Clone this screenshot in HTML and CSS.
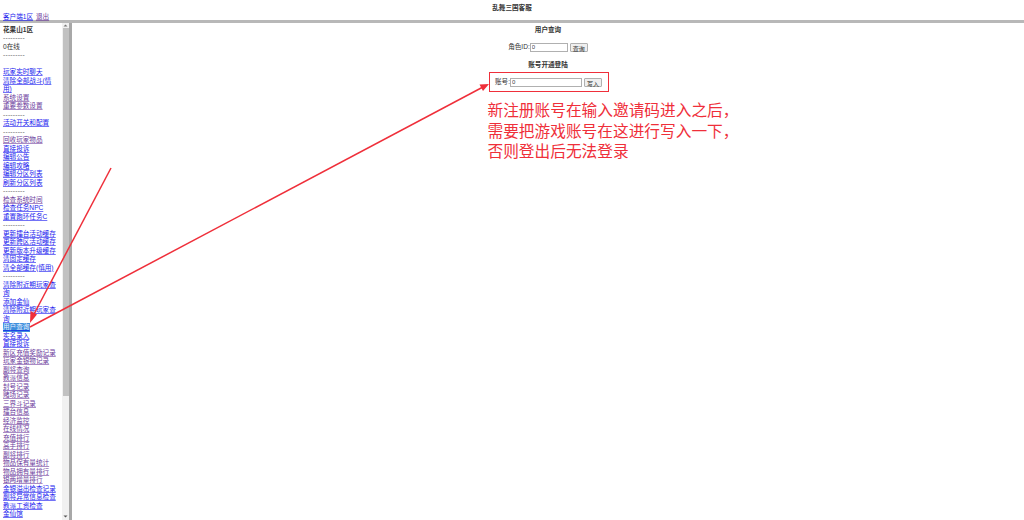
FILE: index.html
```html
<!DOCTYPE html>
<html lang="zh">
<head>
<meta charset="utf-8">
<title>乱舞三国客服</title>
<link rel="stylesheet" href="styles.css">
</head>
<body>
<header class="top">
  <div class="title">乱舞三国客服</div>
  <div class="top-links"><a href="#a">客户端1区</a> <a class="seen" href="#b">退出</a></div>
</header>
<div class="frames">
  <nav class="side">
    <div class="zone">花果山1区</div>
    <div class="dash">---------</div>
    <div>0在线</div>
    <div class="dash">---------</div>
    <div class="blank"></div>
    <a href="#1">玩家实时聊天</a>
    <a href="#2">清除全部战斗(情用)</a>
    <a class="seen" href="#3">系统设置</a>
    <a class="seen" href="#4">重要参数设置</a>
    <div class="dash">---------</div>
    <a href="#5">活动开关和配置</a>
    <div class="dash">---------</div>
    <a class="seen" href="#6">回收玩家物品</a>
    <a href="#7">直接投诉</a>
    <a href="#8">编辑公告</a>
    <a href="#9">编辑攻略</a>
    <a href="#10">编辑分区列表</a>
    <a href="#11">刷新分区列表</a>
    <div class="dash">---------</div>
    <a class="seen" href="#12">检查系统时间</a>
    <a href="#13">检查任务NPC</a>
    <a href="#14">重置跑环任务C</a>
    <div class="dash">---------</div>
    <a href="#15">更新擂台活动缓存</a>
    <a href="#16">更新跨区活动缓存</a>
    <a href="#17">更新版本升级缓存</a>
    <a href="#18">清固定缓存</a>
    <a href="#19">清全部缓存(慎用)</a>
    <div class="dash">---------</div>
    <a href="#20">清除附近期玩家查询</a>
    <a href="#21">添加金仙</a>
    <a href="#22">清除附近期玩家查询</a>
    <a class="picked" href="#23">用户查询</a>
    <a href="#24">实名录入</a>
    <a href="#25">直接投诉</a>
    <a class="seen" href="#26">新区充值奖励记录</a>
    <a class="seen" href="#27">玩家金银物记录</a>
    <a class="seen" href="#28">副将查询</a>
    <a class="seen" href="#29">教派信息</a>
    <a class="seen" href="#30">封号记录</a>
    <a class="seen" href="#31">赌场记录</a>
    <a class="seen" href="#32">三界斗记录</a>
    <a class="seen" href="#33">擂台信息</a>
    <a class="seen" href="#34">经济监控</a>
    <a class="seen" href="#35">在线情况</a>
    <a class="seen" href="#36">充值排行</a>
    <a class="seen" href="#37">高手排行</a>
    <a class="seen" href="#38">副将排行</a>
    <a class="seen" href="#39">物品保有量统计</a>
    <a class="seen" href="#40">物品拥有量排行</a>
    <a class="seen" href="#41">银两增量排行</a>
    <a href="#42">金银溢出检查记录</a>
    <a href="#43">副将异常信息检查</a>
    <a href="#44">教派工资检查</a>
    <a href="#45">金仙馆</a>
  </nav>
  <div class="rail" aria-hidden="true">
    <svg class="step" width="7" height="5" viewBox="0 0 7 5"><path d="M3.500 1.500 L5.500 3.500 L1.500 3.500 Z" fill="#777"/></svg>
    <div class="thumb"></div>
    <svg class="step end" width="7" height="5" viewBox="0 0 7 5"><path d="M3.500 3.500 L5.500 1.500 L1.500 1.500 Z" fill="#555"/></svg>
  </div>
  <main class="content">
    <h3 class="head">用户查询</h3>
    <form class="line">
      <label for="role">角色ID:</label><input id="role" class="field short" value="0"><button type="button" class="btn">查询</button>
    </form>
    <h3 class="head second">账号开通登陆</h3>
    <form class="line boxed">
      <label for="acct">账号:</label><input id="acct" class="field long" value="0"><button type="button" class="btn">写入</button>
    </form>
    <p class="note">新注册账号在输入邀请码进入之后，<br>需要把游戏账号在这进行写入一下，<br>否则登出后无法登录</p>
  </main>
</div>
<svg class="marks" width="1024" height="520" viewBox="0 0 1024 520" aria-hidden="true">
  <g stroke="#ef2f3a" stroke-width="1.5" fill="none">
    <path d="M111 168 L33 316"/>
    <path d="M30 327 L483 87"/>
  </g>
  <path d="M30 323 L30.500 311 L37 314.500 Z" fill="#ef2f3a"/>
  <path d="M489 84 L479.500 84.500 L483 91 Z" fill="#ef2f3a"/>
</svg>
</body>
</html>
```
FILE: styles.css
```css
* { box-sizing: border-box; }
html, body { margin: 0; height: 100%; overflow: hidden; background: #fff; }
body {
  font-family: "Liberation Sans", "Noto Sans CJK SC", sans-serif;
  font-size: 6.6px;
  line-height: 8.5px;
  color: #333;
  display: flex;
  flex-direction: column;
}
a {
  color: #1a1aee;
  display: block;
  text-decoration-color: rgba(0, 0, 238, .55);
}
a.seen { color: #6a3a9c; text-decoration-color: rgba(85, 26, 139, .5); }
.top { height: 23px; flex: none; border-bottom: 3px solid #b8b8b8; padding: 4px 3px 0; }
.title { text-align: center; font-weight: 700; height: 8px; }
.top-links { margin-top: 1px; }
.top-links a { display: inline; margin-right: 1px; }
.frames { flex: 1; display: flex; min-height: 0; }
.side {
  width: 62px;
  flex: none;
  overflow: hidden;
  padding: 2.5px 4.5px 0 3px;
}
.rail {
  width: 10px;
  flex: none;
  display: flex;
  flex-direction: column;
  align-items: flex-start;
  background: #f1f1f1;
  border-right: 3px solid #a8a8a8;
}
.step { flex: none; }
.thumb { width: 6px; height: 368px; margin-left: .5px; background: #c1c1c1; }
.end { margin-top: auto; margin-bottom: 1px; }
.zone { font-weight: 700; }
.dash { color: #666; letter-spacing: .25px; }
.blank { height: 8.5px; }
.picked { background: #3f8fdc; color: #e6efff; width: 27px; }
.content { flex: 1; padding-top: 3px; text-align: center; }
.head { margin: 0; font-size: 6.6px; line-height: 8.5px; font-weight: 700; }
.second { margin-top: 9px; }
.line { display: flex; justify-content: center; align-items: center; margin-top: 8px; height: 9px; }
.field {
  font: 6px "Liberation Sans", sans-serif;
  height: 9px;
  padding: 0 1px;
  border: 1px solid #b0b0b0;
  color: #444;
  background: #fff;
}
.short { width: 38px; }
.long { width: 72px; }
.btn {
  font: 6px "Liberation Sans", "Noto Sans CJK SC", sans-serif;
  height: 9px;
  width: 18px;
  margin-left: 2px;
  padding: 0;
  background: #efefef;
  border: 1px solid #b0b0b0;
  border-radius: 1px;
  color: #333;
}
.boxed {
  width: 120px;
  height: 20px;
  margin: 3px 0 0 417px;
  padding-left: 5px;
  justify-content: flex-start;
  border: 1px solid #ef2f3a;
}
.note {
  margin: 9px 0 0 415.5px;
  text-align: left;
  color: #ef2f3a;
  font: 15.7px/20.5px "Liberation Sans", "Noto Sans CJK SC", sans-serif;
  white-space: nowrap;
}
.marks { position: absolute; left: 0; top: 0; pointer-events: none; }
```
